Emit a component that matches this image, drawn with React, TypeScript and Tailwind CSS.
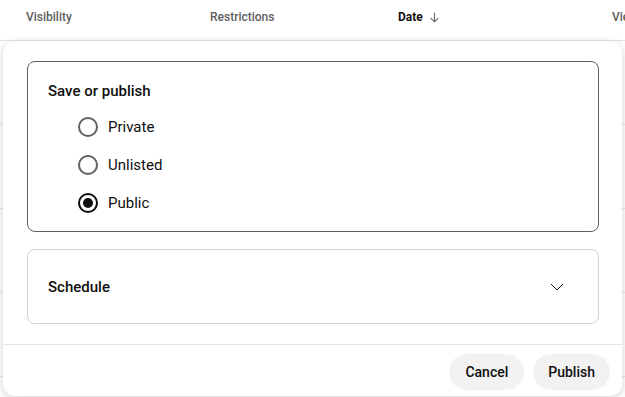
import React from "react";

const font = { fontFamily: "Roboto, 'Liberation Sans', sans-serif" };

function Radio({ label, checked }: { label: string; checked?: boolean }) {
  return (
    <label className="flex items-center h-[38px] gap-[10px] cursor-pointer">
      <span
        className={
          "w-[20px] h-[20px] rounded-full border-2 flex items-center justify-center " +
          (checked ? "border-[#0f0f0f]" : "border-[#606060]")
        }
      >
        {checked && <span className="w-[10px] h-[10px] rounded-full bg-[#0f0f0f]" />}
      </span>
      <span className="text-[15px] text-[#0f0f0f]">{label}</span>
    </label>
  );
}

export default function App() {
  return (
    <div className="relative w-[625px] h-[397px] overflow-hidden bg-white" style={font}>
      {/* table header behind the dialog */}
      <div className="h-[41px] border-b border-[#e5e5e5] flex items-start pt-[8px] text-[12px] font-medium text-[#606060] whitespace-nowrap">
        <div className="w-[210px] shrink-0 pl-[26px]">Visibility</div>
        <div className="w-[188px] shrink-0">Restrictions</div>
        <div className="w-[214px] shrink-0 flex items-center gap-[5px] text-[#0f0f0f] font-bold">
          Date
          <svg width="13" height="13" viewBox="0 0 24 24" fill="none" stroke="#606060" strokeWidth="2">
            <path d="M12 3v17M5 13l7 7 7-7" />
          </svg>
        </div>
        <div className="shrink-0">Views</div>
      </div>
      {/* table rows */}
      <div className="flex flex-col">
        {[0, 1, 2, 3].map((i) => (
          <div key={i} className="h-[84px] border-b border-[#e5e5e5]" />
        ))}
      </div>

      {/* dialog */}
      <div className="absolute left-[3px] top-[41px] w-[619px] h-[355px] bg-white rounded-[12px] shadow-[0_2px_8px_rgba(0,0,0,0.18)] flex flex-col">
        <div className="px-[24px] pt-[20px] flex flex-col gap-[17px] pr-[23px]">
          <div className="h-[171px] border border-[#606060] rounded-[8px] pl-[20px] pt-[19px]">
            <div className="text-[15px] font-medium text-[#0f0f0f] leading-[20px]">Save or publish</div>
            <div className="flex flex-col pl-[30px] mt-[7px]">
              <Radio label="Private" />
              <Radio label="Unlisted" />
              <Radio label="Public" checked />
            </div>
          </div>
          <div className="h-[75px] border border-[#d3d3d3] rounded-[8px] pl-[20px] pr-[32px] flex items-center justify-between">
            <div className="text-[15px] font-medium text-[#0f0f0f] pt-[2px]">Schedule</div>
            <svg width="18" height="18" viewBox="0 0 24 24" fill="none" stroke="#0f0f0f" strokeWidth="1.3">
              <path d="M4 8l8 8 8-8" />
            </svg>
          </div>
        </div>
        <div className="mt-[20px] border-t border-[#e5e5e5] flex justify-end gap-[9px] pt-[9px] pr-[12px]">
          <button className="h-[36px] px-[16px] rounded-full bg-[#f2f2f2] text-[14px] font-medium text-[#0f0f0f]">
            Cancel
          </button>
          <button className="h-[36px] px-[15px] rounded-full bg-[#f2f2f2] text-[14px] font-medium text-[#0f0f0f]">
            Publish
          </button>
        </div>
      </div>
    </div>
  );
}
